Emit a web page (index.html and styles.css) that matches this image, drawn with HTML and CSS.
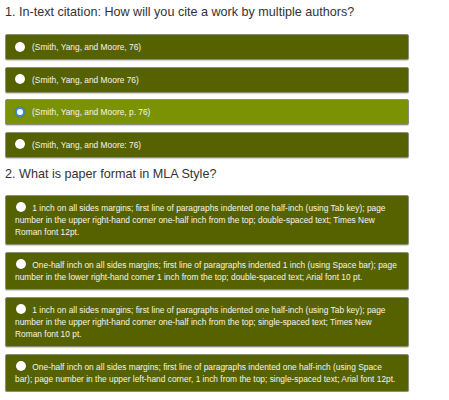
FILE: index.html
```html
<!DOCTYPE html>
<html>
<head>
<meta charset="utf-8">
<link rel="stylesheet" href="styles.css">
</head>
<body>
<div class="quiz">
  <h2 class="question q1">1. In-text citation: How will you cite a work by multiple authors?</h2>
  <ul class="options">
    <li class="option"><span class="radio"></span>(Smith, Yang, and Moore, 76)</li>
    <li class="option"><span class="radio"></span>(Smith, Yang, and Moore 76)</li>
    <li class="option active"><span class="radio"></span>(Smith, Yang, and Moore, p. 76)</li>
    <li class="option"><span class="radio"></span>(Smith, Yang, and Moore: 76)</li>
  </ul>
  <h2 class="question q2">2. What is paper format in MLA Style?</h2>
  <ul class="options">
    <li class="option multi"><span class="radio"></span> 1 inch on all sides margins; first line of paragraphs indented one half-inch (using Tab key); page number in the upper right-hand corner one-half inch from the top; double-spaced text; Times New Roman font 12pt.</li>
    <li class="option multi"><span class="radio"></span> One-half inch on all sides margins; first line of paragraphs indented 1 inch (using Space bar); page number in the lower right-hand corner 1 inch from the top; double-spaced text; Arial font 10 pt.</li>
    <li class="option multi"><span class="radio"></span> 1 inch on all sides margins; first line of paragraphs indented one half-inch (using Tab key); page number in the upper right-hand corner one-half inch from the top; single-spaced text; Times New Roman font 10 pt.</li>
    <li class="option multi"><span class="radio"></span> One-half inch on all sides margins; first line of paragraphs indented one half-inch (using Space bar); page number in the upper left-hand corner, 1 inch from the top; single-spaced text; Arial font 12pt.</li>
  </ul>
</div>
</body>
</html>
```
FILE: styles.css
```css
* { box-sizing: border-box; }
body {
  margin: 0;
  background: #fff;
  font-family: Arial, "Liberation Sans", sans-serif;
}
.quiz {
  width: 409px;
  padding: 4px 0 0 5px;
}
.question {
  margin: 0;
  font-size: 12.6px;
  font-weight: normal;
  color: #333;
  line-height: 16px;
}
.q1 { margin-bottom: 14px; }
.q2 { margin: 8px 0 13px 0; }
.options {
  list-style: none;
  margin: 0;
  padding: 0;
  display: flex;
  flex-direction: column;
  gap: 6.5px;
}
.option {
  background: #566200;
  border: 1px solid #8c8f7a;
  border-radius: 2px;
  box-shadow: 0 1px 1px rgba(0,0,0,0.18);
  color: #f5f5ee;
  font-size: 8.4px;
  line-height: 12px;
  padding: 6px 8px 6px 9px;
}
.option.active {
  background: #7b9204;
}
.option.multi + .option.multi { margin-top: 0.5px; }
.radio {
  display: inline-block;
  width: 10px;
  height: 10px;
  border-radius: 50%;
  background: #fff;
  vertical-align: -1.5px;
  margin-right: 7px;
  box-shadow: 0 0 1px rgba(0,0,0,0.4);
}
.option.multi .radio {
  margin-left: 1px;
  margin-right: 4px;
}
.option.active .radio {
  border: 2px solid #3a8fd8;
}
```
